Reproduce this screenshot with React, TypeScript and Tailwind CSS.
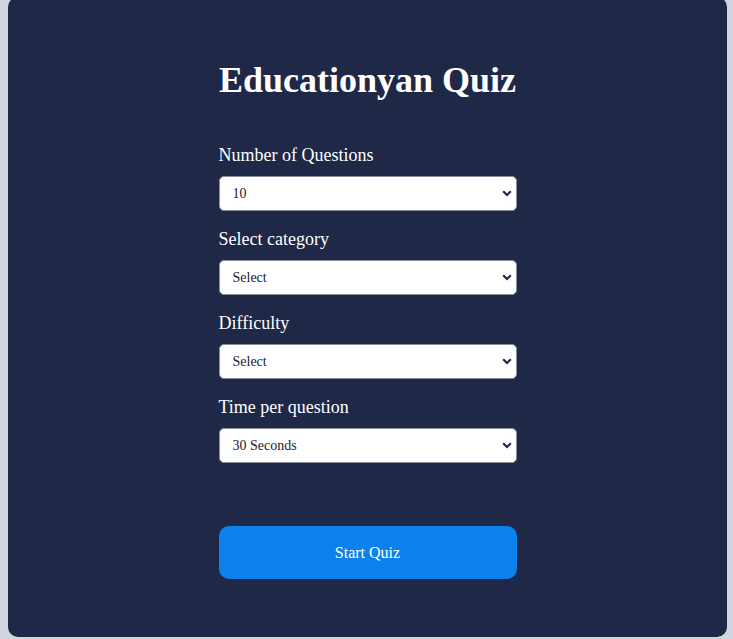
import { useState } from "react";

function Field({
  label,
  options,
  value,
  onChange,
}: {
  label: string;
  options: string[];
  value: string;
  onChange: (v: string) => void;
}) {
  return (
    <div className="flex flex-col">
      <label className="text-[18px] leading-[21px] text-white">{label}</label>
      <div className="relative mt-[10px]">
        <select
          value={value}
          onChange={(e) => onChange(e.target.value)}
          className="h-[35px] w-full appearance-none rounded-[5px] border border-[#8a8f9c] bg-white pl-[13px] pr-8 text-[14px] text-[#1c1c2a] outline-none"
        >
          {options.map((o) => (
            <option key={o}>{o}</option>
          ))}
        </select>
        {/* chevron */}
        <svg
          className="pointer-events-none absolute right-[5px] top-[14px]"
          width="10"
          height="7"
          viewBox="0 0 10 7"
        >
          <path d="M1.2 1.2 L5 5 L8.8 1.2" fill="none" stroke="#1f2847" strokeWidth="2.2" />
        </svg>
      </div>
    </div>
  );
}

export default function App() {
  const [count, setCount] = useState("10");
  const [cat, setCat] = useState("Select");
  const [diff, setDiff] = useState("Select");
  const [time, setTime] = useState("30 Seconds");

  return (
    <div className="min-h-[639px] overflow-hidden bg-[#d2d5e0] pl-2 font-['Liberation_Serif',serif]">
      <div className="-mt-[3px] flex h-[640px] w-[719px] flex-col items-center rounded-[10px] bg-[#1f2847]">
        <div className="flex w-[298px] flex-col">
          <h1 className="mt-[62px] text-center text-[36px] font-bold leading-[43px] text-white">
            Educationyan Quiz
          </h1>

          <div className="mt-[43px] flex flex-col gap-[18px]">
            <Field
              label="Number of Questions"
              options={["5", "10", "15", "20"]}
              value={count}
              onChange={setCount}
            />
            <Field
              label="Select category"
              options={["Select", "General Knowledge", "Science", "History"]}
              value={cat}
              onChange={setCat}
            />
            <Field
              label="Difficulty"
              options={["Select", "Easy", "Medium", "Hard"]}
              value={diff}
              onChange={setDiff}
            />
            <Field
              label="Time per question"
              options={["15 Seconds", "30 Seconds", "60 Seconds"]}
              value={time}
              onChange={setTime}
            />
          </div>

          <button className="mt-[63px] h-[53px] w-full rounded-[10px] bg-[#0b81ee] text-[16px] text-white">
            Start Quiz
          </button>
        </div>
      </div>
    </div>
  );
}
